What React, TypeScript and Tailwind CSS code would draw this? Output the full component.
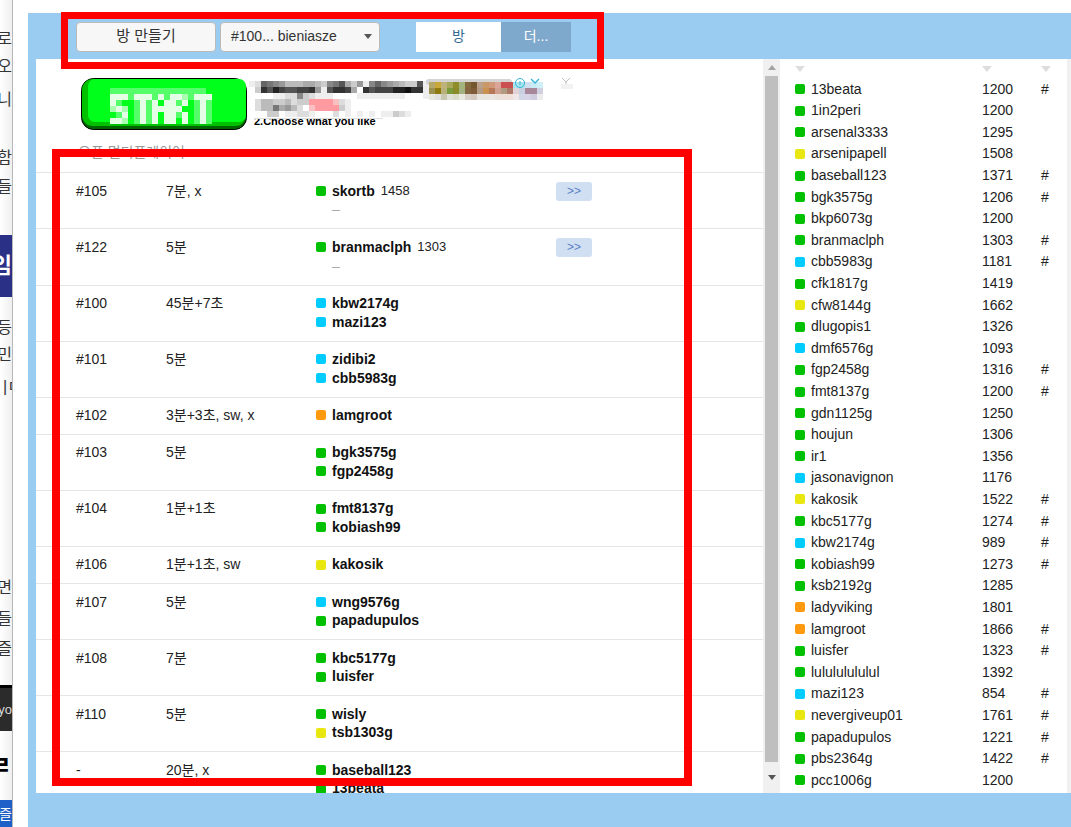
import React from 'react';

type Dot = 'g' | 'c' | 'y' | 'o';

const DOT_CLASS: Record<Dot, string> = {
  g: 'bg-[#00c000]',
  c: 'bg-[#00ccff]',
  y: 'bg-[#e8e810]',
  o: 'bg-[#ff9a10]',
};

interface Player {
  name: string;
  dot: Dot;
  rating?: string;
}

interface Game {
  id: string;
  time: string;
  players: Player[];
  waiting?: boolean;
}

const GAMES: Game[] = [
  { id: '#105', time: '7분, x', waiting: true, players: [{ name: 'skortb', dot: 'g', rating: '1458' }] },
  { id: '#122', time: '5분', waiting: true, players: [{ name: 'branmaclph', dot: 'g', rating: '1303' }] },
  { id: '#100', time: '45분+7초', players: [{ name: 'kbw2174g', dot: 'c' }, { name: 'mazi123', dot: 'c' }] },
  { id: '#101', time: '5분', players: [{ name: 'zidibi2', dot: 'c' }, { name: 'cbb5983g', dot: 'c' }] },
  { id: '#102', time: '3분+3초, sw, x', players: [{ name: 'lamgroot', dot: 'o' }] },
  { id: '#103', time: '5분', players: [{ name: 'bgk3575g', dot: 'g' }, { name: 'fgp2458g', dot: 'g' }] },
  { id: '#104', time: '1분+1초', players: [{ name: 'fmt8137g', dot: 'g' }, { name: 'kobiash99', dot: 'g' }] },
  { id: '#106', time: '1분+1초, sw', players: [{ name: 'kakosik', dot: 'y' }] },
  { id: '#107', time: '5분', players: [{ name: 'wng9576g', dot: 'c' }, { name: 'papadupulos', dot: 'g' }] },
  { id: '#108', time: '7분', players: [{ name: 'kbc5177g', dot: 'g' }, { name: 'luisfer', dot: 'g' }] },
  { id: '#110', time: '5분', players: [{ name: 'wisly', dot: 'g' }, { name: 'tsb1303g', dot: 'y' }] },
  { id: '-', time: '20분, x', players: [{ name: 'baseball123', dot: 'g' }, { name: '13beata', dot: 'g' }] },
];

const USERS: [string, Dot, string, boolean][] = [
  ['13beata', 'g', '1200', true],
  ['1in2peri', 'g', '1200', false],
  ['arsenal3333', 'g', '1295', false],
  ['arsenipapell', 'y', '1508', false],
  ['baseball123', 'g', '1371', true],
  ['bgk3575g', 'g', '1206', true],
  ['bkp6073g', 'g', '1200', false],
  ['branmaclph', 'g', '1303', true],
  ['cbb5983g', 'c', '1181', true],
  ['cfk1817g', 'g', '1419', false],
  ['cfw8144g', 'y', '1662', false],
  ['dlugopis1', 'g', '1326', false],
  ['dmf6576g', 'c', '1093', false],
  ['fgp2458g', 'g', '1316', true],
  ['fmt8137g', 'g', '1200', true],
  ['gdn1125g', 'g', '1250', false],
  ['houjun', 'g', '1306', false],
  ['ir1', 'g', '1356', false],
  ['jasonavignon', 'c', '1176', false],
  ['kakosik', 'y', '1522', true],
  ['kbc5177g', 'g', '1274', true],
  ['kbw2174g', 'c', '989', true],
  ['kobiash99', 'g', '1273', true],
  ['ksb2192g', 'g', '1285', false],
  ['ladyviking', 'o', '1801', false],
  ['lamgroot', 'o', '1866', true],
  ['luisfer', 'g', '1323', true],
  ['lulululululul', 'g', '1392', false],
  ['mazi123', 'c', '854', true],
  ['nevergiveup01', 'y', '1761', true],
  ['papadupulos', 'g', '1221', true],
  ['pbs2364g', 'g', '1422', true],
  ['pcc1006g', 'g', '1200', false],
];

// blurred parts of the ad banner, one character per 6px block
const START_BLOCKS = [
  '11111111111111110',
  '33313331313321333',
  '31001313033130131',
  '23201313333300131',
  '01301313033130131',
  '33201313033030131',
];
const START_SHADES = ['#00ff1a', '#55ff6a', '#a8ffb0', '#e4ffe6'];

const GREY_BLOCKS = [
  'ed6789bbbaabc875ac9e8689abcc5e',
  'fc3524554439e5334af3544422133e',
  'ffffeedd8cdeeeffffeeeeeeeefffe',
  'fdbbccbdccPPPPQdeffffffffffff',
  'fdbb7a9bdfQPPPPcefffffffffffff',
  'fffccfeeddefffdfefefefeecdefff',
];

const COLOR_BLOCKS = [
  ['#b3a76a', '#c9a83a', '#bfb27a', '#a6a75a', '#8f8c2a', '#a3b47c', '#856a40', '#74562f', '#bba08c', '#c99868', '#d09a7a', '#dca59a', '#cc5050', '#c85050', '#a8e4ee', '#a8e4ee', '#d0e0f0', '#c8ecf4', '#d0f0f8'],
  ['#9c9050', '#8f7a10', '#b8b27a', '#7a9a3c', '#8a8a28', '#a3b080', '#85653f', '#7f5a38', '#b29a85', '#c99050', '#b87858', '#cfa090', '#b09a80', '#ad7868', '#e0d4d8', '#c8d0e0', '#a88898', '#a88898', '#d0d0e0'],
  ['#e8e8e0', '#e0e0e0', '#c8c8b0', '#e0e0d8', '#d8dcc8', '#e8e8e0', '#d8d0c8', '#d4c8c0', '#e8e4e0', '#e8e4e0', '#eae6e4', '#eae0dc', '#f0e0dc', '#f0e0dc', '#f0e8e8', '#d0d8e8', '#d8d4e4', '#d0cce0', '#ececec'],
];

function greyColor(c: string) {
  if (c === 'P') return '#ff9aa0';
  if (c === 'Q') return '#f8c0c0';
  return `#${c}${c}${c}`;
}

function AdBanner() {
  return (
    <svg width="500" height="54" viewBox="0 0 500 54" className="block">
      {/* start button */}
      <rect x="0.5" y="0.5" width="165" height="51" rx="12" fill="#006400" stroke="#000" />
      <rect x="1" y="1" width="164" height="47" rx="11" fill="#00c000" />
      <rect x="7" y="1" width="158" height="43" rx="7" fill="#00ff1a" />
      {START_BLOCKS.map((row, y) =>
        row.split('').map((c, x) => (
          <rect key={`s${y}-${x}`} x={29 + x * 6} y={10 + y * 6} width="6" height="6" fill={START_SHADES[Number(c)]} />
        )),
      )}
      {/* blurred headline */}
      {GREY_BLOCKS.map((row, y) =>
        row.split('').map((c, x) => (
          <rect key={`g${y}-${x}`} x={168 + x * 6} y={3 + y * 6} width="6" height="6" fill={greyColor(c)} />
        )),
      )}
      {/* blurred thumbs */}
      <rect x="345" y="1" width="86" height="6" rx="3" fill="#d4d4d4" />
      {COLOR_BLOCKS.map((row, y) =>
        row.map((c, x) => (
          <rect key={`c${y}-${x}`} x={348 + x * 6} y={4 + y * 6} width="6" height="6" fill={c} />
        )),
      )}
      {/* ad choice marks */}
      <circle cx="439" cy="5" r="4.5" fill="none" stroke="#35b4d8" strokeWidth="1" />
      <path d="M439 3v4" stroke="#35b4d8" strokeWidth="1" />
      <path d="M450 1l4 4 4-4" fill="none" stroke="#35b4d8" strokeWidth="1.4" />
      <path d="M481 0l4 4 4-4M485 4v2" fill="none" stroke="#bbb" strokeWidth="1" />
      <rect x="480" y="6" width="12" height="5" fill="#f2f2f2" />
    </svg>
  );
}

function Bullet({ dot }: { dot: Dot }) {
  return <span className={`w-[10px] h-[10px] rounded-[2px] shrink-0 mr-[6px] ${DOT_CLASS[dot]}`} />;
}

function GameRow({ game }: { game: Game }) {
  return (
    <div className="flex border-t border-[#e5e5e5] pl-[40px] pt-[8.3px] pb-[9.25px] leading-[18.75px] text-[14px] text-[#222]">
      <div className="w-[90px] shrink-0">{game.id}</div>
      <div className="w-[150px] shrink-0">{game.time}</div>
      <div className="w-[240px] shrink-0">
        {game.players.map(p => (
          <div key={p.name} className="flex items-center h-[18.75px]">
            <Bullet dot={p.dot} />
            <span className="font-bold text-[#111]">{p.name}</span>
            {p.rating && <span className="ml-[6px] text-[13px]">{p.rating}</span>}
          </div>
        ))}
        {game.waiting && <div className="pl-[16px] text-[#aaa]">–</div>}
      </div>
      {game.waiting && (
        <div className="w-[36px] h-[19px] rounded-[3px] bg-[#d0dff2] text-[#5a80c8] text-[12px] leading-[19px] text-center">
          &gt;&gt;
        </div>
      )}
    </div>
  );
}

function Triangle({ className }: { className: string }) {
  return (
    <svg width="10" height="6" viewBox="0 0 10 6" className={`block ${className}`}>
      <path d="M0 0h10L5 6z" fill="currentColor" />
    </svg>
  );
}

function SideSliver() {
  const line = 'flex shrink-0 justify-end whitespace-nowrap leading-none';
  return (
    <div className="w-[13px] shrink-0 h-full overflow-hidden border-r border-[#b8b8b8] bg-gradient-to-r from-white to-[#efefef] text-[#333] text-[16px] flex flex-col">
      <div className={`${line} mt-[31px] h-[16px]`}>로</div>
      <div className={`${line} mt-[12px] h-[16px]`}>오</div>
      <div className={`${line} mt-[17px] h-[16px]`}>니</div>
      <div className={`${line} mt-[42px] h-[16px]`}>함</div>
      <div className={`${line} mt-[13px] h-[16px]`}>들</div>
      <div className={`${line} mt-[40px] h-[62px] bg-[#2a3086] text-white font-bold text-[22px] items-center`}>임</div>
      <div className={`${line} mt-[23px] h-[16px]`}>등</div>
      <div className={`${line} mt-[11px] h-[16px]`}>민</div>
      <div className="flex shrink-0 whitespace-nowrap leading-none mt-[16px] h-[16px] pl-[3px]">|ㅁ</div>
      <div className={`${line} mt-[185px] h-[16px]`}>면</div>
      <div className={`${line} mt-[15px] h-[16px]`}>들</div>
      <div className={`${line} mt-[14px] h-[16px]`}>즐</div>
      <div className={`${line} mt-[28px] h-[46px] bg-[#2b2b2b] text-[#ddd] text-[13px] items-center border-t-[3px] border-black`}>yo</div>
      <div className={`${line} mt-[24px] h-[22px] text-black font-bold text-[26px] items-center`}>ㄹ</div>
      <div className={`${line} mt-[23px] h-[27px] bg-[#1f5fc8] text-white text-[14px] items-center`}>· 즐</div>
    </div>
  );
}

function Toolbar() {
  return (
    <div className="h-[46px] pt-[9px] pl-[48px] flex items-start text-[14px]">
      <div className="w-[140px] h-[30px] pb-[2px] rounded-[4px] border border-[#bbb] bg-[#f7f7f7] text-[#333] text-[15px] flex items-center justify-center">
        방 만들기
      </div>
      <div className="ml-[4px] w-[160px] h-[30px] pb-[1px] rounded-[4px] border border-[#bbb] bg-[#f7f7f7] text-[#333] flex items-center justify-between pl-[10px] pr-[7px]">
        <span>#100... bieniasze</span>
        <Triangle className="w-[8px] h-[5px] text-[#555]" />
      </div>
      <div className="ml-[36px] w-[85px] h-[30px] pb-[2px] bg-white text-[#336a94] flex items-center justify-center">방</div>
      <div className="w-[70px] h-[30px] pb-[2px] bg-[#7fa9cc] text-white flex items-center justify-center">더...</div>
    </div>
  );
}

function Scrollbar() {
  return (
    <div className="w-[17px] shrink-0 h-full bg-[#f0f0f0] flex flex-col items-center">
      <div className="h-[17px] flex items-center">
        <Triangle className="w-[8px] h-[5px] rotate-180 text-[#a3a3a3]" />
      </div>
      <div className="w-[13px] h-[686px] bg-[#bfbfbf]" />
      <div className="flex-1 flex items-center">
        <Triangle className="w-[8px] h-[5px] text-[#555]" />
      </div>
    </div>
  );
}

function GameList() {
  return (
    <div className="w-[727px] shrink-0 h-full overflow-hidden">
      <div className="relative h-[113.42px]">
        <div className="absolute left-[45px] top-[19px]">
          <AdBanner />
        </div>
        <div className="absolute left-[218px] top-[59px] w-[129px] h-[9px] overflow-hidden border-t border-[#ddd] text-[11px] font-bold leading-[12px] text-black">
          <span className="block -mt-[4px] whitespace-nowrap">2.Choose what you like</span>
        </div>
        <div className="absolute left-[42px] top-[83px] text-[14px] text-[#999]">오픈 멀티플레이어</div>
      </div>
      {GAMES.map(g => (
        <GameRow key={g.id} game={g} />
      ))}
    </div>
  );
}

function UserList() {
  return (
    <div className="flex-1 h-full overflow-hidden flex text-[14px] text-[#222]">
      <div className="w-[287px] shrink-0 pl-[15px]">
        <div className="h-[19.4px] flex items-center text-[#ddd]">
          <Triangle className="w-[10px]" />
          <Triangle className="w-[10px] ml-[177px]" />
          <Triangle className="w-[10px] ml-[49px]" />
        </div>
        {USERS.map(([name, dot, rating, mark]) => (
          <div key={name} className="flex items-center h-[21.6px]">
            <Bullet dot={dot} />
            <span className="w-[171px] shrink-0">{name}</span>
            <span className="w-[59px] shrink-0">{rating}</span>
            <span>{mark ? '#' : ''}</span>
          </div>
        ))}
      </div>
      <div className="flex-1 bg-[#f0f0f0]" />
    </div>
  );
}

export default function App() {
  return (
    <div className="relative flex w-[1071px] h-[827px] overflow-hidden bg-white font-['Liberation_Sans','Noto_Sans_CJK_KR',sans-serif]">
      <SideSliver />
      <div className="flex-1 ml-[15px] mt-[13px] bg-[#99ccf0]">
        <Toolbar />
        <div className="ml-[8px] h-[734px] flex bg-white">
          <GameList />
          <Scrollbar />
          <UserList />
        </div>
      </div>

      {/* red highlight boxes drawn over the screenshot */}
      <div className="absolute left-[61px] top-[12px] w-[543px] h-[57px] border-[7px] border-[#ff0000]" />
      <div className="absolute left-[52px] top-[149px] w-[640px] h-[637px] border-[8px] border-[#ff0000]" />
    </div>
  );
}
